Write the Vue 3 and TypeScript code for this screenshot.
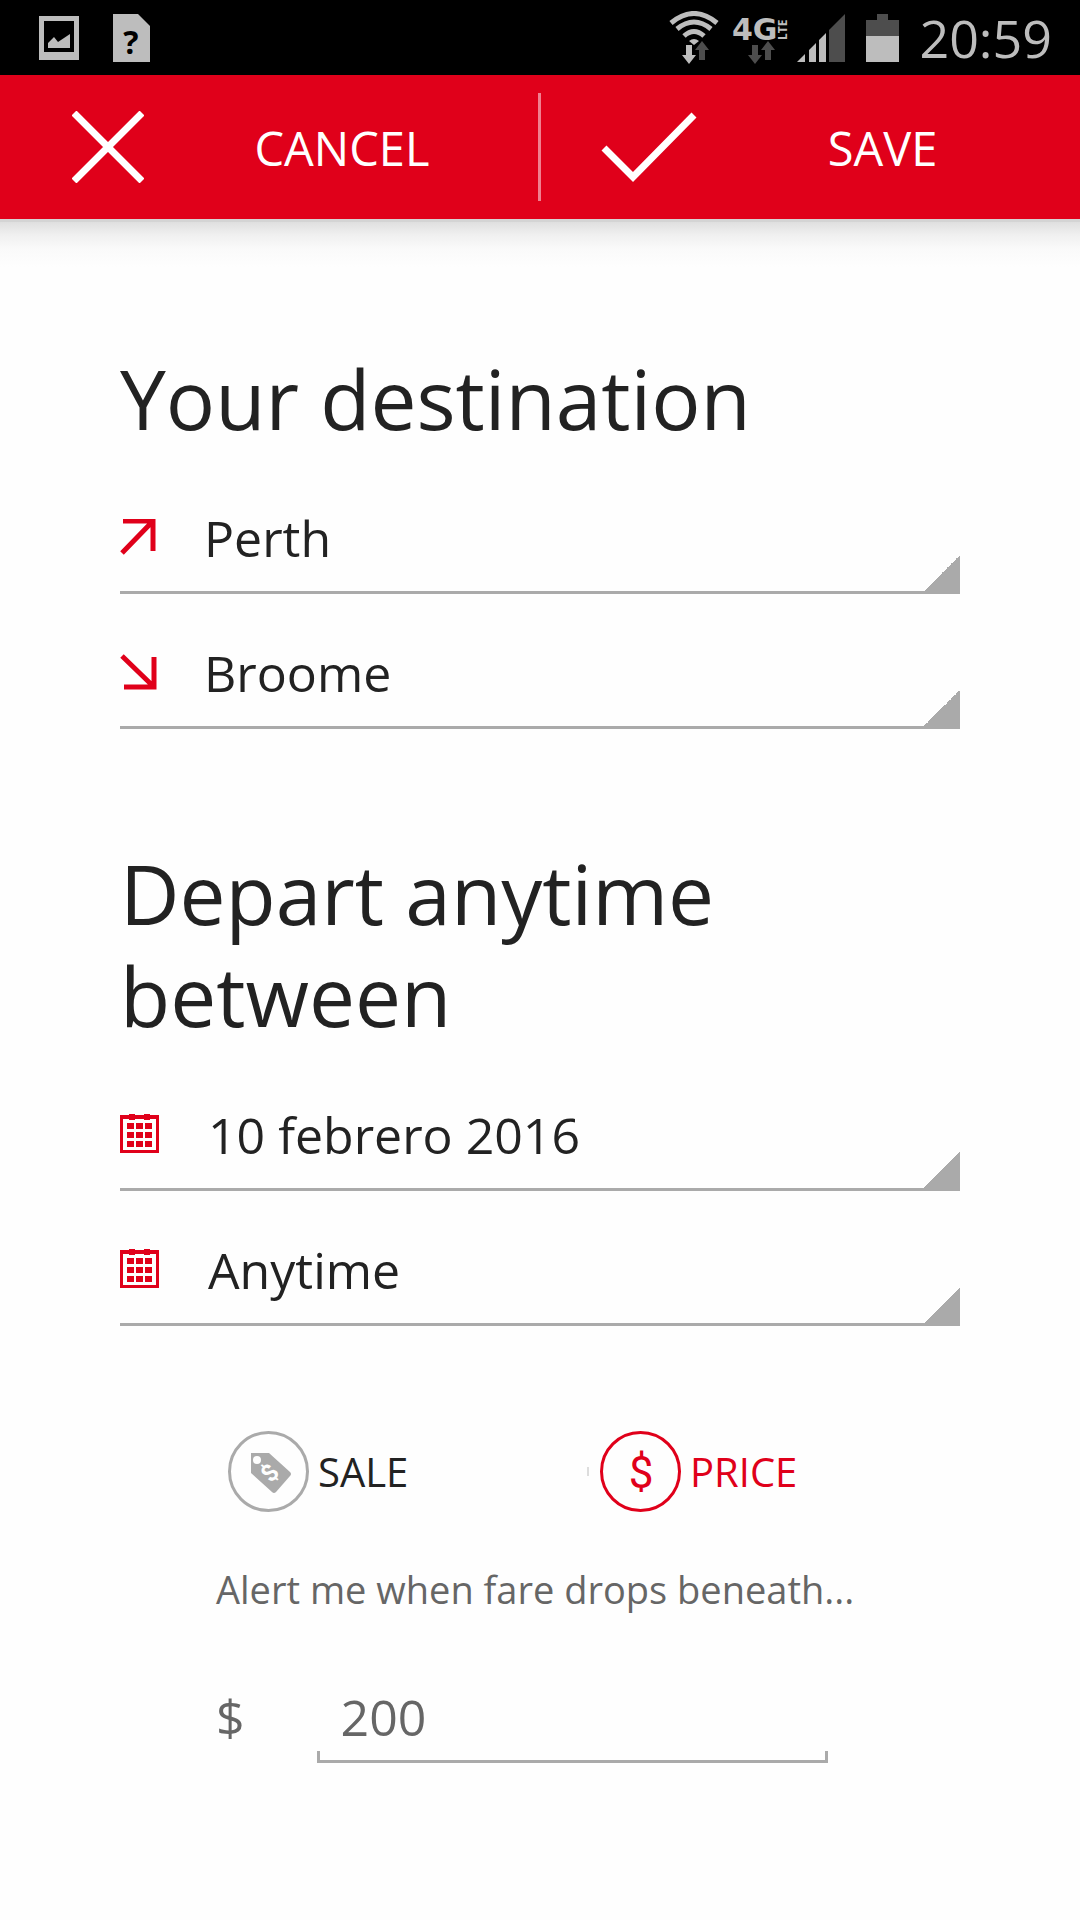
<script setup lang="ts">
import { ref } from 'vue'

interface Field {
  id: string
  label: string
  icon: 'up' | 'down' | 'calendar'
  value: string
}

interface Section {
  title: string
  fields: Field[]
}

const sections: Section[] = [
  {
    title: 'Your destination',
    fields: [
      { id: 'origin', label: 'Origin', icon: 'up', value: 'Perth' },
      { id: 'arrival', label: 'Destination', icon: 'down', value: 'Broome' },
    ],
  },
  {
    title: 'Depart anytime between',
    fields: [
      { id: 'from', label: 'Earliest date', icon: 'calendar', value: '10 febrero 2016' },
      { id: 'until', label: 'Latest date', icon: 'calendar', value: 'Anytime' },
    ],
  },
]

const alertType = ref<'sale' | 'price'>('price')
const amount = ref('200')
const cells = [0, 9, 18]
</script>

<template>
  <div class="screen">
    <div class="status">
      <svg class="status-picture" width="40" height="44" viewBox="0 0 40 44" aria-hidden="true">
        <path fill="#bdbdbd" fill-rule="evenodd" d="M0 0H40V44H0ZM5 5V36H35V5Z" />
        <path fill="#bdbdbd" d="M9 32V27L15 21L19 26L31 18V32Z" />
      </svg>
      <svg class="status-sim" width="37" height="48" viewBox="0 0 37 48" aria-hidden="true">
        <path fill="#bdbdbd" d="M0 0H25L37 12V48H0Z" />
        <text x="18" y="40" text-anchor="middle" class="sim-mark">?</text>
      </svg>
      <svg class="status-wifi" width="50" height="54" viewBox="0 0 50 54" aria-hidden="true">
        <g fill="none" stroke="#bdbdbd" stroke-width="5">
          <path d="M2 12Q25 -7 48 12" />
          <path d="M8 18Q25 4 42 18" />
          <path d="M15 25Q25 16 35 25" />
        </g>
        <path fill="#bdbdbd" d="M20 30Q25 26 30 30L25 34Z" />
        <path fill="#bdbdbd" d="M17 34H23V44H27L20 53L13 44H17Z" />
        <path fill="#4d4d4d" d="M33 30L40 39H36V49H30V39H26Z" />
      </svg>
      <svg class="status-network" width="64" height="66" viewBox="-4 -9 64 66" aria-hidden="true">
        <text x="-1" y="26" class="net-main">4G</text>
        <text transform="translate(54 26) rotate(-90)" class="net-sub">LTE</text>
        <path fill="#4d4d4d" d="M19 31H25V41H29L22 50L15 41H19Z" />
        <path fill="#4d4d4d" d="M35 27L42 36H38V46H32V36H28Z" />
      </svg>
      <svg class="status-signal" width="48" height="48" viewBox="0 0 48 48" aria-hidden="true">
        <path fill="#bdbdbd" d="M0 48L8 40V48ZM12 36L19 29V48H12ZM22 26L29 19V48H22Z" />
        <path fill="#4d4d4d" d="M32 16L48 0V48H32Z" />
      </svg>
      <svg class="status-battery" width="33" height="48" viewBox="0 0 33 48" aria-hidden="true">
        <path fill="#4d4d4d" d="M11 0H22V6H33V22H0V6H11Z" />
        <path fill="#bdbdbd" d="M0 22H33V48H0Z" />
      </svg>
      <span class="clock">20:59</span>
    </div>

    <header class="actions">
      <button type="button" class="action">
        <svg class="action-icon cross" width="72" height="72" viewBox="0 0 72 72" aria-hidden="true">
          <path d="M2 2L70 70M70 2L2 70" />
        </svg>
        <span class="action-text">CANCEL</span>
      </button>
      <button type="button" class="action save">
        <svg class="action-icon check" width="96" height="72" viewBox="0 0 96 72" aria-hidden="true">
          <path d="M3 37L32 66L93 4" />
        </svg>
        <span class="action-text">SAVE</span>
      </button>
    </header>

    <main class="content">
      <section v-for="section in sections" :key="section.title" class="section">
        <h1>{{ section.title }}</h1>
        <div v-for="field in section.fields" :key="field.id" class="field">
          <label :for="field.id" class="field-label" :aria-label="field.label">
            <svg v-if="field.icon === 'up'" width="38" height="36" viewBox="0 0 38 36">
              <path class="arrow" d="M3 2H33V32M33 2L2 34" />
            </svg>
            <svg v-else-if="field.icon === 'down'" width="38" height="36" viewBox="0 0 38 36">
              <path class="arrow" d="M4 33H34V3M34 33L2 2" />
            </svg>
            <svg v-else width="42" height="40" viewBox="0 0 42 40">
              <path fill="#e0001a" fill-rule="evenodd" d="M0 1H9V0H15V1H24V0H30V1H39V39H0ZM3 5V36H36V5H30V6H24V5H15V6H9V5Z" />
              <g fill="#e0001a">
                <template v-for="y in cells" :key="y">
                  <rect v-for="x in cells" :key="x" :x="x + 7" :y="y + 9" width="7" height="6" />
                </template>
              </g>
            </svg>
          </label>
          <select :id="field.id">
            <option>{{ field.value }}</option>
          </select>
        </div>
      </section>

      <section class="alert">
        <div class="choices" role="radiogroup" aria-label="Alert type">
          <label class="choice" :class="{ active: alertType === 'sale' }">
            <input v-model="alertType" type="radio" name="alert" value="sale" />
            <svg width="81" height="81" viewBox="0 0 81 81" aria-hidden="true">
              <circle cx="40.5" cy="40.5" r="39" fill="none" stroke="currentColor" stroke-width="3" />
              <path
                fill="currentColor"
                fill-rule="evenodd"
                d="M23 22H41L62 41Q64 43 62 45L48 61Q46 63 44 61L23 42ZM29 25A4 4 0 1 0 29 33A4 4 0 1 0 29 25Z"
              />
              <text transform="translate(42 42) rotate(-48)" y="8" text-anchor="middle" class="tag-mark">$</text>
            </svg>
            <span>SALE</span>
          </label>
          <label class="choice" :class="{ active: alertType === 'price' }">
            <input v-model="alertType" type="radio" name="alert" value="price" />
            <svg width="81" height="81" viewBox="0 0 81 81" aria-hidden="true">
              <circle cx="40.5" cy="40.5" r="39" fill="none" stroke="currentColor" stroke-width="3" />
              <text x="41" y="57" text-anchor="middle" class="price-mark">$</text>
            </svg>
            <span>PRICE</span>
          </label>
        </div>
        <label for="amount" class="hint">Alert me when fare drops beneath...</label>
        <div class="amount">
          <span class="currency">$</span>
          <input id="amount" v-model="amount" type="text" inputmode="numeric" />
        </div>
      </section>
    </main>
  </div>
</template>

<style>
body {
  margin: 0;
  background: #fefefe;
}
</style>

<style scoped>
.screen {
  min-height: 100vh;
  background: #fefefe;
  color: #222;
  font-family: 'Open Sans', 'Noto Sans', sans-serif;
}

svg {
  display: block;
  flex: none;
}

.status {
  display: flex;
  align-items: center;
  height: 75px;
  padding: 0 28px 0 39px;
  background: #000;
}

.status-sim {
  margin-left: 34px;
}

.status-wifi {
  margin-left: auto;
}

.status-network {
  margin-left: 10px;
}

.status-signal {
  margin-left: 4px;
}

.status-battery {
  margin-left: 21px;
}

.clock {
  margin-left: 20px;
  color: #bdbdbd;
  font-size: 52px;
  line-height: 75px;
}

.sim-mark {
  font: bold 32px 'Open Sans', sans-serif;
  fill: #000;
}

.net-main {
  font: bold 30px 'DejaVu Sans', sans-serif;
  fill: #bdbdbd;
}

.net-sub {
  font: bold 12px 'Open Sans', sans-serif;
  fill: #bdbdbd;
}

.actions {
  position: relative;
  display: grid;
  grid-template-columns: 1fr 1fr;
  height: 144px;
  background: #e0001a;
}

.actions::before {
  content: '';
  position: absolute;
  top: 18px;
  bottom: 18px;
  left: 50%;
  width: 3px;
  margin-left: -2px;
  background: #f08090;
}

.actions::after {
  content: '';
  position: absolute;
  top: 100%;
  left: 0;
  right: 0;
  height: 48px;
  background: linear-gradient(#d4d4d4 3px, #dfdfdf 3px, #f0f0f0 16px, #fafafa 30px, #fefefe);
}

.action {
  display: flex;
  align-items: center;
  padding: 0;
  border: 0;
  background: none;
  color: #fff;
  font: inherit;
  font-size: 47px;
  line-height: 64px;
}

.save {
  padding-right: 12px;
}

.action-icon {
  fill: none;
  stroke: #fff;
  stroke-width: 7;
}

.cross {
  margin-left: 72px;
}

.check {
  margin-left: 61px;
}

.action-text {
  flex: 1;
  padding-top: 2px;
  text-align: center;
}

.content {
  padding: 128px 120px 0;
}

.section {
  margin-bottom: 113px;
}

h1 {
  margin: 0 0 10px;
  font-size: 82px;
  font-weight: 400;
  line-height: 102px;
}

.field {
  display: flex;
  align-items: center;
  gap: 46px;
  padding: 42px 0 18px;
  border-bottom: 3px solid #aaa;
  background: linear-gradient(135deg, transparent 50%, #aaa 50%) right bottom / 36px 36px no-repeat;
}

.arrow {
  fill: none;
  stroke: #e0001a;
  stroke-width: 5;
}

select {
  flex: 1;
  min-width: 0;
  height: 72px;
  padding: 2px 0 0;
  border: 0;
  background: none;
  color: inherit;
  font: inherit;
  font-size: 50px;
  line-height: 70px;
  appearance: none;
}

.alert {
  margin-top: -8px;
  padding-left: 96px;
}

.choices {
  display: grid;
  grid-template-columns: 1fr 1fr;
}

.choice {
  position: relative;
  display: flex;
  align-items: center;
  gap: 9px;
  padding-left: 12px;
  color: #aaa;
  font-size: 40px;
  line-height: 54px;
}

.choice + .choice::before {
  content: '';
  position: absolute;
  left: -1px;
  width: 2px;
  height: 9px;
  background: #ddd;
}

.choice span {
  color: #222;
}

.choice.active,
.choice.active span {
  color: #e0001a;
}

.choice input {
  position: absolute;
  width: 81px;
  height: 81px;
  margin: 0;
  opacity: 0;
}

.tag-mark {
  font: bold 24px Roboto, sans-serif;
  fill: #fefefe;
}

.price-mark {
  font: 44px Roboto, sans-serif;
  fill: currentColor;
}

.hint {
  display: block;
  margin-top: 50px;
  color: #666;
  font-size: 38px;
  line-height: 54px;
}

.amount {
  display: flex;
  gap: 72px;
  margin: 64px 132px 0 0;
  color: #666;
  font-size: 50px;
  line-height: 74px;
}

.amount input {
  flex: 1;
  min-width: 0;
  height: 83px;
  box-sizing: border-box;
  padding: 0 24px 6px;
  border: 0;
  border-bottom: 3px solid #aaa;
  border-radius: 0;
  outline: 0;
  background:
    linear-gradient(#aaa, #aaa) left bottom / 3px 9px no-repeat,
    linear-gradient(#aaa, #aaa) right bottom / 3px 9px no-repeat;
  color: inherit;
  font: inherit;
}
</style>
